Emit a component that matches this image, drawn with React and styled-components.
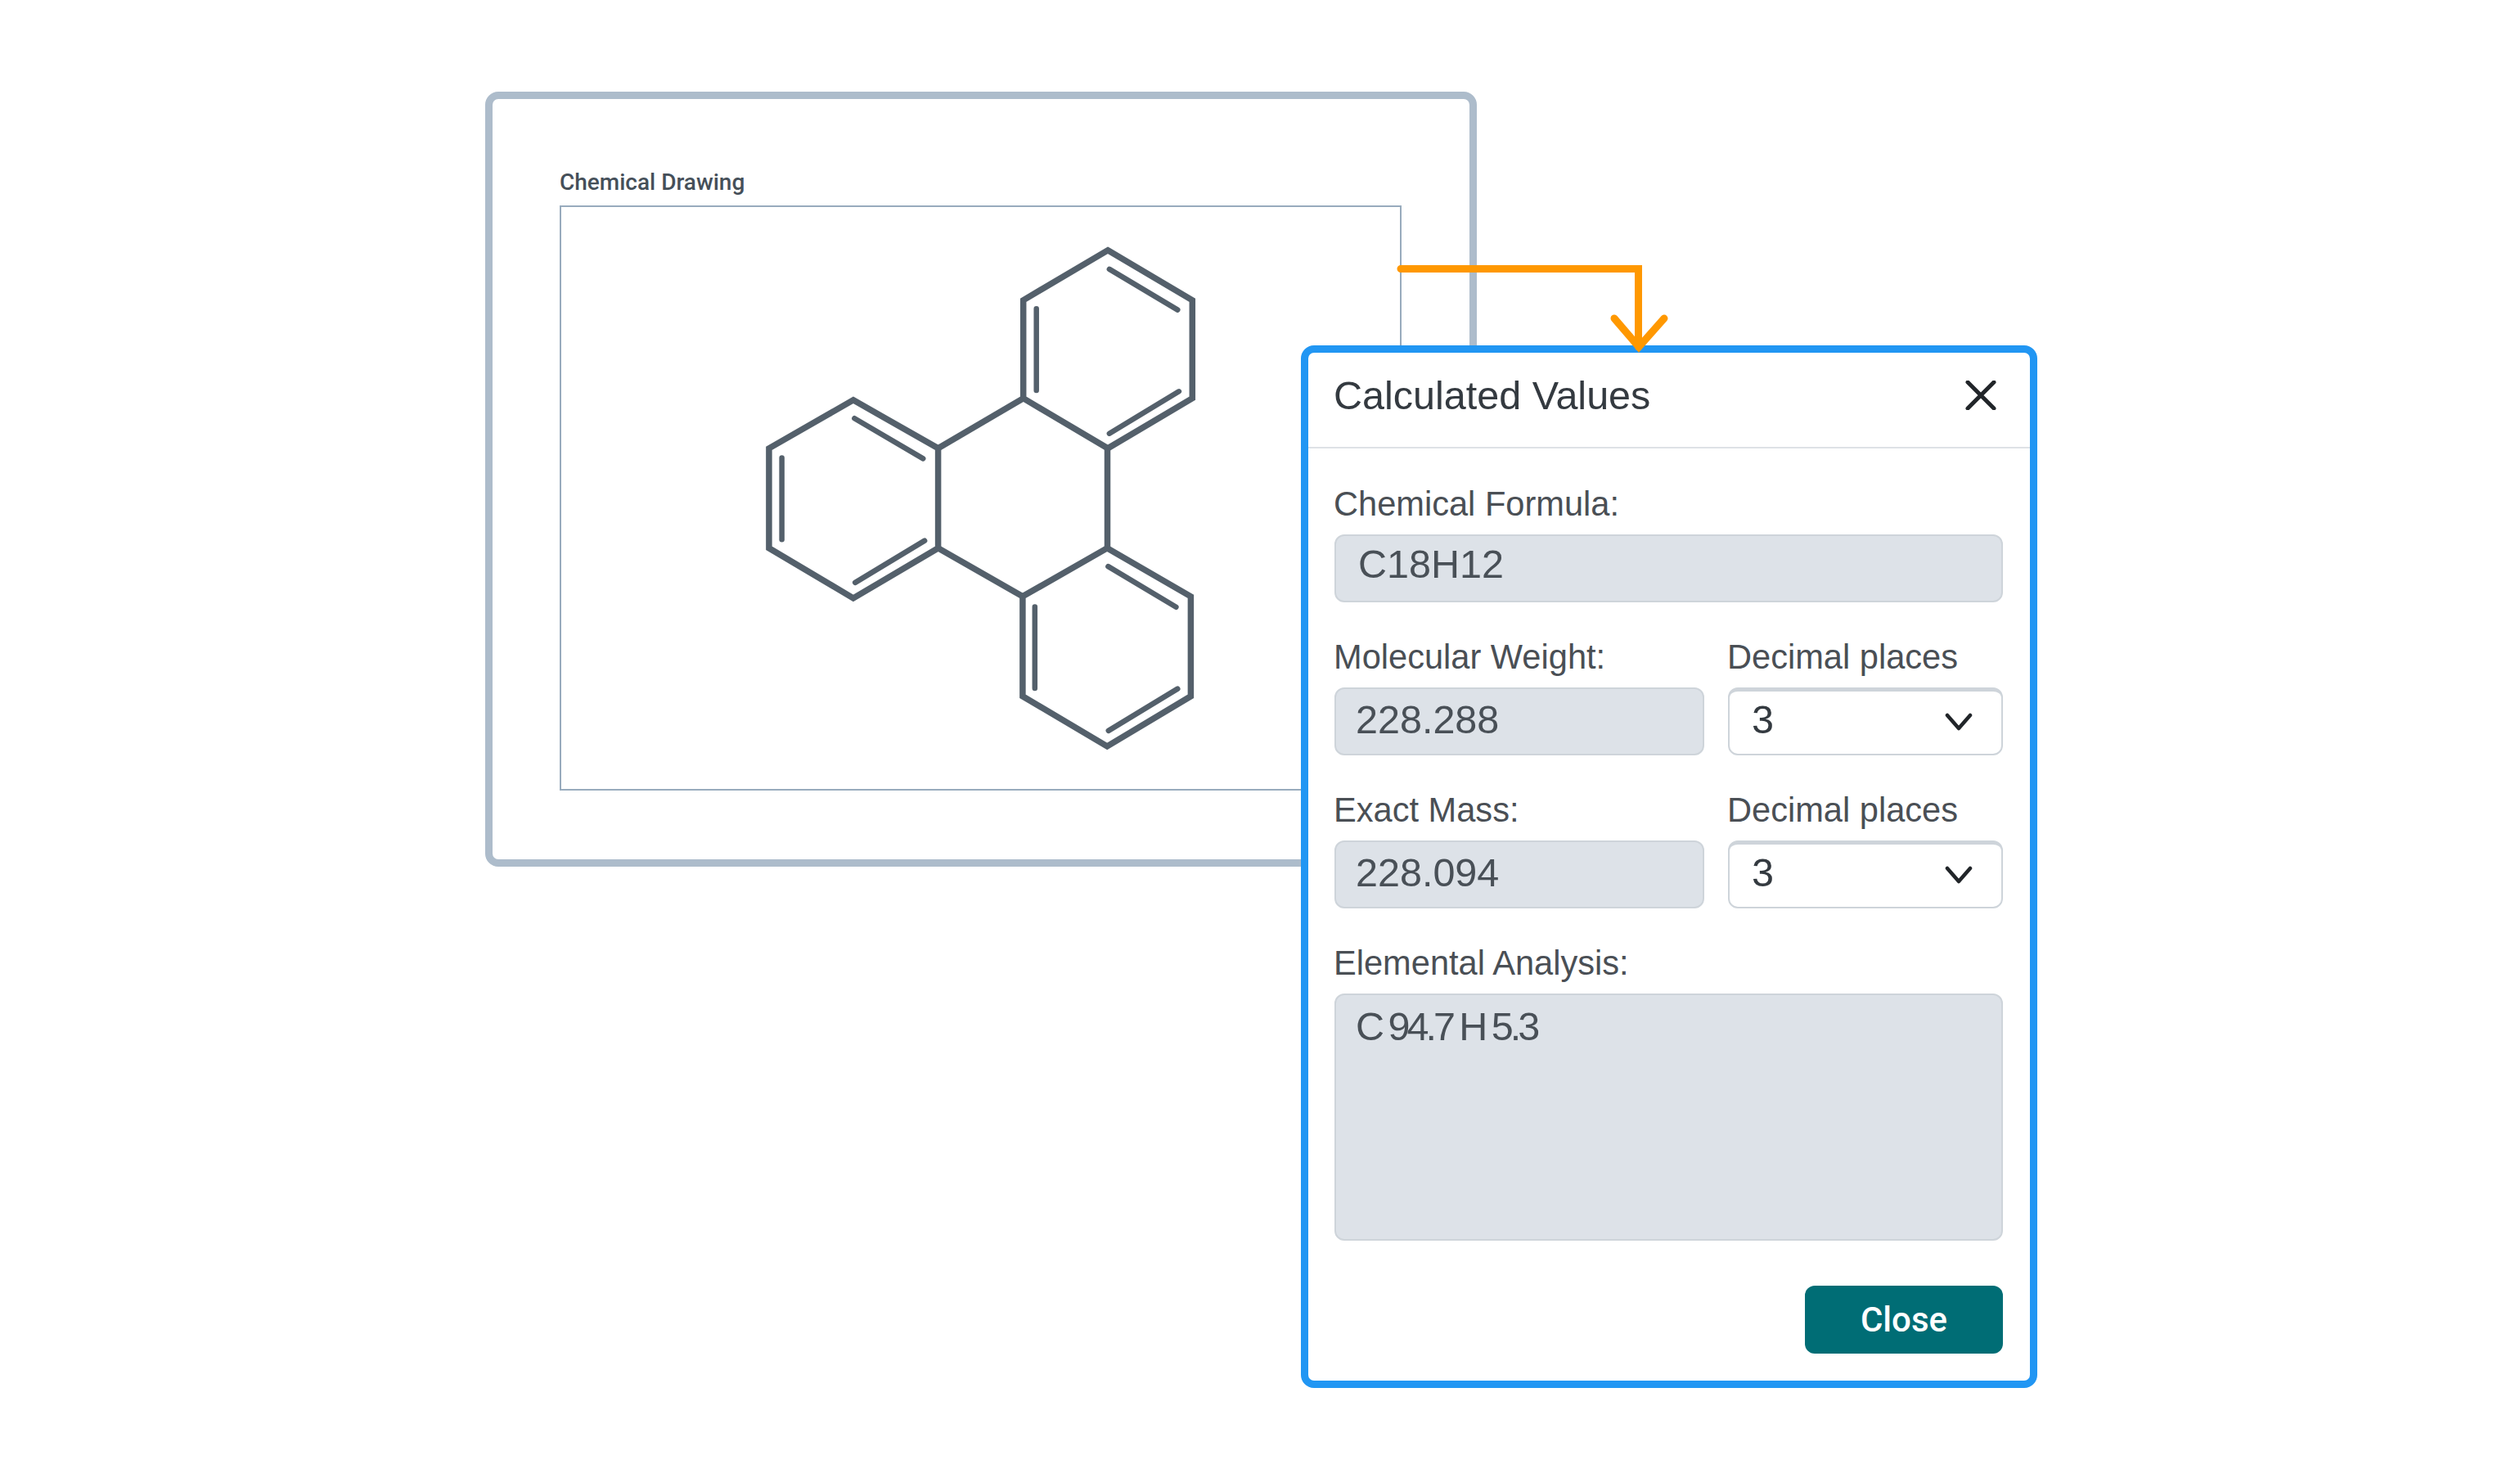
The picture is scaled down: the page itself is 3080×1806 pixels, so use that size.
import React from "react";
import styled, { createGlobalStyle } from "styled-components";

const Global = createGlobalStyle`
  html, body { margin: 0; padding: 0; background: #fff; }
  #root { width: 3080px; height: 1806px; overflow: hidden; }
  * { box-sizing: border-box; }
`;

const Stage = styled.div`
  position: relative;
  width: 3080px;
  height: 1806px;
  background: #fff;
  padding: 112px 0 0 593px;
`;

const Card = styled.section`
  width: 1212px;
  height: 947px;
  border: 9px solid #adbccb;
  border-radius: 16px;
  padding: 85px 83px 84px 82px;
  display: flex;
  flex-direction: column;
`;

const CardLabel = styled.div`
  font-family: Roboto, "Liberation Sans", sans-serif;
  font-weight: 500;
  font-size: 28px;
  line-height: 34px;
  height: 45px;
  color: #454f59;
`;

const DrawingBox = styled.div`
  flex: 1;
  border: 2px solid #98abbd;
  display: flex;
  align-items: center;
  justify-content: center;
`;

const MoleculeSvg = styled.svg`
  width: 536px;
  height: 625px;
  display: block;
  fill: none;
  stroke: #54606b;
`;

const Arrow = styled.svg`
  position: absolute;
  left: 1700px;
  top: 316px;
  width: 345px;
  height: 120px;
  z-index: 2;
  fill: none;
  stroke: #ff9800;
  stroke-width: 9;
  stroke-linecap: round;
  stroke-linejoin: miter;
`;

const Modal = styled.section`
  position: absolute;
  left: 1590px;
  top: 422px;
  width: 900px;
  height: 1274px;
  background: #fff;
  border: 9px solid #2196f3;
  border-radius: 16px;
  display: flex;
  flex-direction: column;
`;

const ModalHeader = styled.header`
  height: 117px;
  flex: none;
  border-bottom: 2px solid #dee2e6;
  display: flex;
  align-items: center;
  justify-content: space-between;
  padding: 0 41px 12px 31px;
`;

const ModalTitle = styled.h2`
  margin: 0;
  font-family: "Liberation Sans", Arial, sans-serif;
  font-weight: 400;
  font-size: 48.5px;
  line-height: 60px;
  color: #343a40;
`;

const CloseIcon = styled.svg`
  width: 38px;
  height: 36px;
  display: block;
  stroke: #212529;
  stroke-width: 5;
  stroke-linecap: round;
  fill: none;
`;

const ModalBody = styled.div`
  flex: 1;
  padding: 22px 33px 33px 32px;
  display: flex;
  flex-direction: column;
`;

const FieldRow = styled.div`
  display: grid;
  grid-template-columns: ${(p) => (p.$split ? "452px 336px" : "1fr")};
  column-gap: 29px;
  margin-bottom: 21px;
`;

const Field = styled.div`
  display: flex;
  flex-direction: column;
`;

const Label = styled.label`
  font-family: "Liberation Sans", Arial, sans-serif;
  font-size: 41.6px;
  line-height: 48px;
  height: 83px;
  padding-top: 22px;
  margin-left: -1px;
  color: #4a4f55;
`;

const ReadOnlyBox = styled.div`
  height: ${(p) => p.$height || 83}px;
  background: #dde2e8;
  border: 2px solid #ced4da;
  border-radius: 12px;
  padding: ${(p) => p.$top ?? 9}px 10px 0 ${(p) => p.$left ?? 24}px;
  font-family: "Liberation Sans", Arial, sans-serif;
  font-size: 48.5px;
  line-height: 56px;
  color: #495057;
  word-spacing: ${(p) => (p.$tight ? "-1px" : "0")};
  letter-spacing: ${(p) => (p.$tight ? "-4px" : "0")};
`;

const SelectBox = styled.div`
  height: 83px;
  background: #fff;
  border: 2px solid #ced4da;
  border-top-width: 5px;
  border-radius: 12px;
  padding: 0 35px 8px 27px;
  display: flex;
  align-items: center;
  justify-content: space-between;
  font-family: "Liberation Sans", Arial, sans-serif;
  font-size: 48.5px;
  color: #343a40;
`;

const Chevron = styled.svg`
  width: 34px;
  height: 22px;
  display: block;
  fill: none;
  stroke: #212529;
  stroke-width: 4.5;
  stroke-linecap: round;
  stroke-linejoin: round;
  margin-top: 6px;
`;

const Footer = styled.div`
  margin-top: auto;
  display: flex;
  justify-content: flex-end;
`;

const CloseButton = styled.button`
  width: 242px;
  height: 83px;
  border: 0;
  border-radius: 12px;
  background: #006d75;
  color: #fff;
  font-family: Roboto, "Liberation Sans", sans-serif;
  font-weight: 500;
  font-size: 42px;
  padding: 0;
`;

const rings = [
  "1353.5,305.3 1456.8,366.3 1456.8,486.2 1353.5,547.3 1250.2,486.2 1250.2,366.3",
  "1042.4,488.3 1146.1,547.3 1146.1,669.3 1042.4,730.4 939.4,669.3 939.4,547.3",
  "1352.7,669.3 1454.9,728.3 1454.9,850.3 1352.7,911.4 1249.4,850.3 1249.4,728.3",
];
const bonds = [
  [1146.1, 547.3, 1250.2, 486.2],
  [1353, 547.3, 1353, 669.3],
  [1146.1, 669.3, 1249.4, 728.3],
];
const inner = [
  [1355.4, 328.4, 1438.8, 378.1],
  [1266.2, 376.8, 1266.2, 476.6],
  [1440.4, 477.8, 1355.4, 529.2],
  [1043.9, 510.7, 1127.7, 559.9],
  [955.1, 559, 955.1, 658.8],
  [1129.6, 660.1, 1044.7, 711.4],
  [1353.9, 691.6, 1436.9, 741.3],
  [1264.3, 740.9, 1264.3, 840.6],
  [1438.8, 841.1, 1354.3, 892.4],
];

const Molecule = () => (
  <MoleculeSvg viewBox="930.5 295.5 536 625">
    {rings.map((p) => (
      <polygon key={p} points={p} strokeWidth="7.5" strokeLinejoin="miter" />
    ))}
    {bonds.map((b) => (
      <line key={b.join()} x1={b[0]} y1={b[1]} x2={b[2]} y2={b[3]} strokeWidth="7.5" />
    ))}
    {inner.map((b) => (
      <line key={b.join()} x1={b[0]} y1={b[1]} x2={b[2]} y2={b[3]} strokeWidth="6.5" strokeLinecap="round" />
    ))}
  </MoleculeSvg>
);

const DecimalSelect = () => (
  <Field>
    <Label>Decimal places</Label>
    <SelectBox>
      <span>3</span>
      <Chevron viewBox="0 0 34 22"><path d="M3 3 L17 19 L31 3" /></Chevron>
    </SelectBox>
  </Field>
);

export default function App() {
  return (
    <>
      <Global />
      <Stage>
        <Card>
          <CardLabel>Chemical Drawing</CardLabel>
          <DrawingBox>
            <Molecule />
          </DrawingBox>
        </Card>
        <Modal>
          <ModalHeader>
            <ModalTitle>Calculated Values</ModalTitle>
            <CloseIcon viewBox="0 0 38 36"><path d="M3 2 L35 34 M35 2 L3 34" /></CloseIcon>
          </ModalHeader>
          <ModalBody>
            <FieldRow>
              <Field>
                <Label>Chemical Formula:</Label>
                <ReadOnlyBox $left={27} $top={6}>C18H12</ReadOnlyBox>
              </Field>
            </FieldRow>
            <FieldRow $split>
              <Field>
                <Label>Molecular Weight:</Label>
                <ReadOnlyBox>228.288</ReadOnlyBox>
              </Field>
              <DecimalSelect />
            </FieldRow>
            <FieldRow $split>
              <Field>
                <Label>Exact Mass:</Label>
                <ReadOnlyBox>228.094</ReadOnlyBox>
              </Field>
              <DecimalSelect />
            </FieldRow>
            <FieldRow>
              <Field>
                <Label>Elemental Analysis:</Label>
                <ReadOnlyBox $height={302} $top={10} $tight>C 94.7 H 5.3</ReadOnlyBox>
              </Field>
            </FieldRow>
            <Footer>
              <CloseButton>Close</CloseButton>
            </Footer>
          </ModalBody>
        </Modal>
        <Arrow viewBox="1700 316 345 120">
          <path d="M1712 328.5 H2002.5 V424" />
          <path d="M1973 389 L2003 424 L2034 389" />
        </Arrow>
      </Stage>
    </>
  );
}
